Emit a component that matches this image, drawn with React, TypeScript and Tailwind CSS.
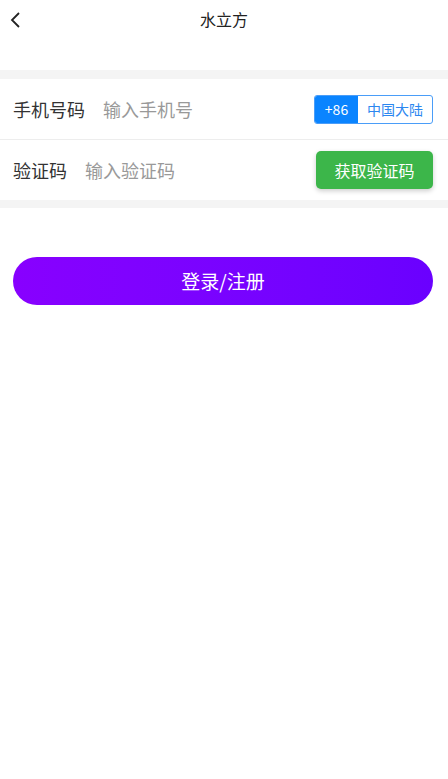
import React from "react";

export default function App() {
  const font = { fontFamily: '"Noto Sans CJK SC", "Noto Sans", sans-serif' };
  return (
    <div className="w-[448px] h-[779px] bg-white flex flex-col" style={font}>
      <div className="h-[38px] flex items-center relative">
        <svg className="absolute left-[8px] top-[11px]" width="14" height="18" viewBox="0 0 14 18">
          <path d="M11 2 L4 9 L11 16" fill="none" stroke="#222" strokeWidth="1.8" />
        </svg>
        <div className="w-full text-center text-[16px] text-[#222] leading-none">水立方</div>
      </div>
      <div className="h-[32px]" />
      <div className="h-[9px] bg-[#f4f4f4]" />
      <div className="h-[61px] flex items-center pl-[13px] pr-[15px] border-b border-[#ededed]">
        <span className="text-[18px] text-[#333] w-[90px]">手机号码</span>
        <span className="text-[18px] text-[#999] flex-1">输入手机号</span>
        <div className="flex h-[29px] w-[119px] border border-[#4a9df8] rounded-[3px] overflow-hidden">
          <div className="w-[43px] bg-[#0a84ff] text-white text-[14px] flex items-center justify-center">+86</div>
          <div className="flex-1 text-[#2c87f0] text-[14px] flex items-center justify-center">中国大陆</div>
        </div>
      </div>
      <div className="h-[60px] flex items-center pl-[13px] pr-[15px]">
        <span className="text-[18px] text-[#333] w-[72px]">验证码</span>
        <span className="text-[18px] text-[#999] flex-1">输入验证码</span>
        <div className="w-[117px] h-[38px] bg-[#3cb64a] rounded-[5px] shadow-[0_2px_5px_rgba(0,0,0,0.2)] text-white text-[16px] flex items-center justify-center">获取验证码</div>
      </div>
      <div className="h-[8px] bg-[#f4f4f4]" />
      <div className="px-[13px] pr-[15px] mt-[49px]">
        <div className="h-[48px] rounded-full bg-gradient-to-r from-[#8800ff] to-[#6a00ff] text-white text-[19px] flex items-center justify-center">登录/注册</div>
      </div>
    </div>
  );
}
